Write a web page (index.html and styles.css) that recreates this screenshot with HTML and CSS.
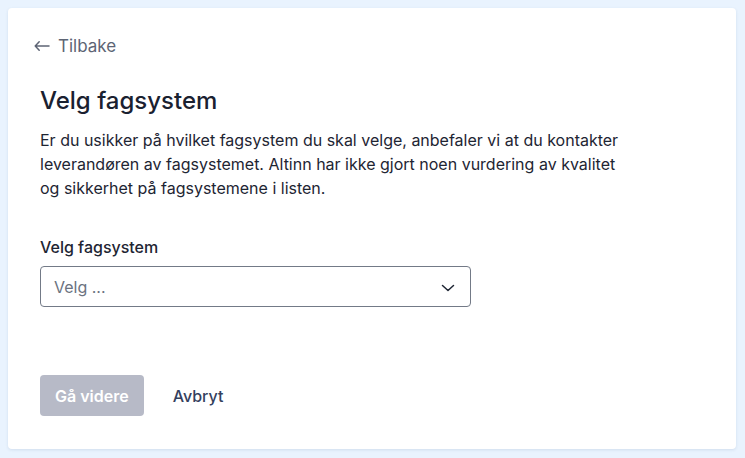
FILE: index.html
```html
<!DOCTYPE html>
<html lang="no">
<head>
<meta charset="utf-8">
<title>Velg fagsystem</title>
<link rel="stylesheet" href="styles.css">
</head>
<body>
<main class="card">
  <a class="back" href="#">
    <svg class="back-icon" width="16" height="16" viewBox="0 0 16 16" fill="none" stroke="currentColor" stroke-width="1.5" stroke-linecap="round" stroke-linejoin="round"><path d="M15 8H1.2M5.2 3.8 1.2 8l4 4.2"/></svg>
    <span>Tilbake</span>
  </a>
  <h1 class="title">Velg fagsystem</h1>
  <p class="intro">Er du usikker på hvilket fagsystem du skal velge, anbefaler vi at du kontakter leverandøren av fagsystemet. Altinn har ikke gjort noen vurdering av kvalitet og sikkerhet på fagsystemene i listen.</p>
  <div class="field">
    <label class="label" for="sys">Velg fagsystem</label>
    <div class="select" id="sys">
      <span class="placeholder">Velg ...</span>
      <svg class="chevron" width="14" height="8" viewBox="0 0 14 8" fill="none" stroke="currentColor" stroke-width="1.5" stroke-linecap="round" stroke-linejoin="round"><path d="M1.5 1.5 7 6.5l5.5-5"/></svg>
    </div>
  </div>
  <div class="actions">
    <button class="btn-primary" disabled>Gå videre</button>
    <button class="btn-link">Avbryt</button>
  </div>
</main>
</body>
</html>
```
FILE: styles.css
```css
html, body {
  margin: 0;
  padding: 0;
}
body {
  background: #e9f3fe;
  padding: 8px;
  font-family: Inter, "Noto Sans", sans-serif;
  color: #1e2533;
  box-sizing: border-box;
  height: 458px;
}
.card {
  background: #ffffff;
  border-radius: 4px;
  box-shadow: 0 1px 3px rgba(40, 70, 120, 0.12);
  width: 728px;
  height: 441px;
  box-sizing: border-box;
  padding: 26px 32px 0 32px;
  display: flex;
  flex-direction: column;
}
.back {
  display: flex;
  align-items: center;
  gap: 8px;
  color: #5d6474;
  text-decoration: none;
  font-size: 17px;
  line-height: 24px;
  align-self: flex-start;
}
.back-icon {
  display: block;
  margin-left: -6px;
}
.title {
  margin: 27px 0 0 0;
  font-size: 24px;
  line-height: 32px;
  font-weight: 500;
  color: #1a2130;
}
.intro {
  margin: 11px 0 0 0;
  font-size: 16px;
  line-height: 24px;
  max-width: 590px;
  color: #1e2533;
}
.field {
  display: flex;
  flex-direction: column;
  margin-top: 35px;
  width: 431px;
}
.label {
  font-size: 16px;
  line-height: 24px;
  font-weight: 500;
  color: #1e2533;
  margin-bottom: 7px;
}
.select {
  height: 41px;
  box-sizing: border-box;
  border: 1px solid #737a87;
  border-radius: 4px;
  display: flex;
  align-items: center;
  justify-content: space-between;
  padding: 2px 15px 0 13px;
}
.placeholder {
  color: #6b7280;
  font-size: 16px;
  margin-top: -2px;
}
.chevron {
  color: #1e2533;
  display: block;
}
.actions {
  display: flex;
  align-items: center;
  gap: 12px;
  margin-top: 68px;
}
.btn-primary {
  background: #b7bac7;
  color: #ffffff;
  border: none;
  border-radius: 4px;
  height: 41px;
  padding: 0 15px;
  font-family: inherit;
  font-size: 16px;
  font-weight: 600;
}
.btn-link {
  background: none;
  border: none;
  color: #34405e;
  font-family: inherit;
  font-size: 16px;
  font-weight: 500;
  padding: 0 17px;
  height: 41px;
}
```
